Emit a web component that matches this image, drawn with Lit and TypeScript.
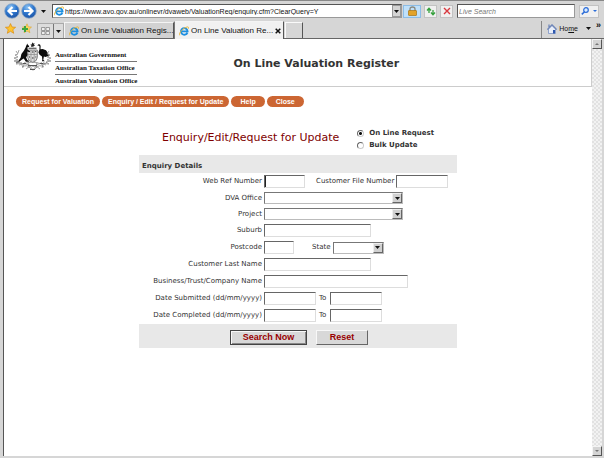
import { LitElement, html, svg, css } from "lit";
import { customElement, property } from "lit/decorators.js";

const ieLogo = html`<svg class="ie" viewBox="0 0 10 10" width="10" height="10" aria-hidden="true">
  <path d="M8.400 6.600A3.300 3.300 0 1 1 8.600 5.400H3" fill="none" stroke="#1d8fe0" stroke-width="1.900"/>
  <path d="M.7 9.300C-.4 7 4 1.600 8.600.9c1.300 0 1.100 1.100.5 2" fill="none" stroke="#e8b63a" stroke-width="1"/>
</svg>`;

const caret = html`<svg viewBox="0 0 5 3" width="5" height="3" aria-hidden="true"><path d="M0 0H5L2.500 3Z" fill="#111"/></svg>`;

const crest = html`<svg class="crest" viewBox="0 0 39 30" width="39" height="30" role="img" aria-label="Coat of arms">
  <path d="M19.500.3l.7 1.300 1.500-.3-.7 1.300 1 1.100-1.500.2-.2 1.500-1-1-1.300.6.4-1.400-1.300-.8 1.500-.4z" fill="#222"/>
  <path d="M15.500 6.300h8" stroke="#666" stroke-width="1.300"/>
  <path d="M14.800 8h9.500v7.500q0 3.500-4.700 5-4.800-1.500-4.800-5z" fill="#ddd" stroke="#666" stroke-width=".8"/>
  <path d="M14.800 12.500h9.500M18 8v11M21.200 8v11" stroke="#888" stroke-width=".7"/>
  <path d="M16 9.500h1M19 10h1.500M22.200 9.500h1M16 15h1M19 16h1.500M22.300 15h1" stroke="#333" stroke-width="1.200"/>
  <path d="M14.300 1.500l.6 1.500 1.400 1-.4 1-1.400.2.1 2.300 2.300 1.800-.3.900-2.500-.7.4 3.500-1.400 2.600 1.300 2.600 1.500.6v.9h-3l-2.200-3.200-2.300 1.500-3 2.600-2.900.2 3-2.100 2.100-3 .8-3.800 2.600-3.500 1.600-2.800.5-1.600z" fill="#0c0c0c"/>
  <path d="M24.300 3.600l1.200-1.300 1.500.2.6 1.400-.1 3.300 2.200-.3 3.300 1.300 2.200 3.200.8 3.200-1.600-.5-1.500.8-2-.3-.6 3.200 1.500 1.500h-2.900l.4-1.400-.3-3.500-2.400-1.600-1.200-2.500 1-2.500.1-3.300-.4-.8z" fill="#0c0c0c"/>
  <g fill="none" stroke="#8a8a8a" stroke-width=".8">
    <path d="M3 9l2 3-3 1 3 2-4 1 4 2-4 1 5 1-3 2 5-.5M6 8l-1 3M36 9l-2 3 3 1-3 2 4 1-4 2 4 1-5 1 3 2-5-.5"/>
    <path d="M5 20q5 3 9 1t11 0 9-1M6 23q5-3 10 0t8 0 9 0M9 25q5-3 8 1t6 0 8-1M13 27l4-3 3 4 3-4 4 3"/>
    <path d="M8 20l2 6M12 20l-2 5M15 20l1 6M24 20l-1 6M28 20l2 5M31 20l-2 6"/>
  </g>
  <path d="M10 21.500h3M15 23.500h9M27 21.500h3M17 27.500h5" stroke="#555" stroke-width="1"/>
</svg>`;

const globe = (flip: boolean) => html`<svg viewBox="0 0 16 16" width="16" height="16" aria-hidden="true">
  <defs><radialGradient id="g" cx=".4" cy=".25" r=".8"><stop offset="0" stop-color="#8cc4f4"/><stop offset=".5" stop-color="#2f78cf"/><stop offset="1" stop-color="#1a4fa0"/></radialGradient></defs>
  <circle cx="8" cy="8" r="7.300" fill="url(#g)" stroke="#8fa9c6" stroke-width=".8"/>
  ${flip
    ? svg`<path d="M3 8h8M7.500 4l4 4-4 4" fill="none" stroke="#fff" stroke-width="2.200"/>`
    : svg`<path d="M13 8H5M8.500 4l-4 4 4 4" fill="none" stroke="#fff" stroke-width="2.200"/>`}
</svg>`;

const control = css`
  button, input, select { font: inherit; color: inherit; margin: 0; padding: 0; border-radius: 0; box-sizing: border-box; }
  button { background: none; border: 0; }
  svg { display: block; flex: none; }
`;

@customElement("browser-chrome")
export class BrowserChrome extends LitElement {
  static styles = [control, css`
    :host { display: block; font: 8px/10px "Liberation Sans", Arial, sans-serif; color: #111; border-top: 1px solid #888; }
    .bar { display: flex; align-items: center; }
    .address { height: 20px; padding: 1px 5px 1px 4px; box-sizing: border-box; }
    .arrows { display: flex; align-items: center; gap: 1px; }
    .arrows .more { margin-left: 3px; }
    .field { display: flex; align-items: center; flex: 1; min-width: 0; height: 14px; margin-left: 6px; box-sizing: border-box; background: #fff; border: 1px solid #999; border-top-color: #555; border-left-color: #555; }
    .field svg { margin-left: 1px; }
    .field input { flex: 1; min-width: 0; border: 0; margin-left: 1px; background: none; outline: 0; font-size: 7px; height: 11px; }
    .drop { display: grid; place-items: center; width: 9px; height: 12px; background: #d4d4d4; border: 1px solid #999; }
    .drop svg { margin: 0; }
    .tool { display: grid; place-items: center; width: 13px; height: 13px; margin-left: 3px; background: #f0f0f0; border: 1px solid #c2c2c2; }
    .lock { width: 18px; margin-left: 1px; background: #bfe0fa; border-color: #8cbde6; }
    .search { flex: none; width: 118px; margin-left: 4px; }
    .search input { font-style: italic; }
    .search input::placeholder { color: #777; opacity: 1; }
    .go { grid-auto-flow: column; gap: 3px; width: 20px; margin-left: 4px; }
    .tabs { height: 17px; align-items: stretch; border-bottom: 1px solid #666; }
    .fav { display: flex; align-items: center; gap: 5px; padding: 0 5px 3px 5px; }
    .quick { display: flex; margin-top: 2px; border: 1px solid #aaa; border-bottom: 0; background: #dcdcdc; }
    .quick button { display: grid; place-items: center; width: 15px; }
    .quick button + button { width: 10px; border-left: 1px solid #777; }
    .tab { display: flex; align-items: center; gap: 2px; width: 110px; margin-top: 1px; padding: 0 4px; box-sizing: border-box; border: 1px solid #f4f4f4; border-right-color: #555; border-bottom: 0; background: #d2d2d2; white-space: nowrap; }
    .tab.on { margin: 0 0 -1px; background: #f1f1f1; border-left-color: #777; }
    .label { flex: 1; text-align: left; }
    .blank { width: 18px; margin: 1px 0 0 1px; border: 1px solid #fafafa; border-right-color: #555; border-bottom: 0; }
    .home { display: flex; align-items: center; gap: 2px; margin-left: auto; padding: 0 3px 2px 5px; border-left: 1px solid #888; }
    .home a { color: inherit; text-decoration: none; font-size: 7px; }
    .home .caret { margin-left: 6px; }
    .chev { margin-left: 3px; font: bold 9px/9px "Liberation Sans", Arial, sans-serif; align-self: flex-start; }
  `];

  render() {
    return html`
      <div class="bar address">
        <div class="arrows">
          <button aria-label="Back">${globe(false)}</button>
          <button aria-label="Forward">${globe(true)}</button>
          <button class="more" aria-label="Recent pages">${caret}</button>
        </div>
        <div class="field">
          ${ieLogo}
          <input aria-label="Address" value="https://www.avo.gov.au/onlinevr/dvaweb/ValuationReq/enquiry.cfm?ClearQuery=Y">
          <button class="drop" aria-label="Show addresses">${caret}</button>
        </div>
        <button class="tool lock" aria-label="Security">
          <svg viewBox="0 0 9 10" width="9" height="10"><path d="M2 5V3q0-2 2.500-2T7 3v2" fill="none" stroke="#8a8a80" stroke-width="1.300"/><rect x=".5" y="4.500" width="8" height="5" rx=".5" fill="#e2a32a" stroke="#a87312" stroke-width=".7"/></svg>
        </button>
        <button class="tool" aria-label="Refresh">
          <svg viewBox="0 0 10 9" width="10" height="9"><path d="M3 1v5M1 3.500L3 1.200 5 3.500M7 8V3M5 5.500l2 2.300 2-2.300" fill="none" stroke="#35a03c" stroke-width="1.300"/></svg>
        </button>
        <button class="tool" aria-label="Stop">
          <svg viewBox="0 0 8 8" width="8" height="8"><path d="M1 1l6 6M7 1L1 7" stroke="#d8383e" stroke-width="1.400"/></svg>
        </button>
        <div class="field search"><input aria-label="Search" placeholder="Live Search"></div>
        <button class="tool go" aria-label="Go">
          <svg viewBox="0 0 8 8" width="8" height="8"><circle cx="5" cy="3" r="2.300" fill="#d9ecff" stroke="#2b6cd8" stroke-width="1.200"/><path d="M3.500 4.800L.8 7.400" stroke="#2b6cd8" stroke-width="1.500"/></svg>
          <svg viewBox="0 0 4 2" width="4" height="2"><path d="M0 0h4L2 2z" fill="#2b6cd8"/></svg>
        </button>
      </div>
      <div class="bar tabs">
        <div class="fav">
          <button aria-label="Favorites"><svg viewBox="0 0 11 11" width="11" height="11"><path d="M5.500.6L7 4l3.600.3L7.800 6.700l.9 3.600-3.200-2-3.200 2 .9-3.600L.4 4.300 4 4z" fill="#ffc42e" stroke="#d98b12" stroke-width=".7"/></svg></button>
          <button aria-label="Add to favorites"><svg viewBox="0 0 11 11" width="11" height="11"><path d="M6 .8l1.300 3 3.200.3L8 6.400l.9 3.300L6 8 3 9.700l.9-3.300L1.500 4.100l3.200-.3z" fill="#ffd45e" stroke="#d9a332" stroke-width=".6"/><path d="M4 3v6M1 6h6" stroke="#3ba63f" stroke-width="2"/></svg></button>
        </div>
        <div class="quick">
          <button aria-label="Quick tabs"><svg viewBox="0 0 9 8" width="9" height="8"><path d="M.5.5h3.500v3H.5zM5 .5h3.500v3H5zM.5 4.500h3.500v3H.5zM5 4.500h3.500v3H5z" fill="#eee" stroke="#888" stroke-width=".8"/></svg></button>
          <button aria-label="Tab list">${caret}</button>
        </div>
        <button class="tab">${ieLogo}<span class="label">On Line Valuation Regis...</span></button>
        <button class="tab on">${ieLogo}<span class="label">On Line Valuation Re...</span>
          <svg viewBox="0 0 6 6" width="6" height="6"><path d="M.7.7l4.600 4.600M5.300.7L.7 5.300" stroke="#111" stroke-width="1.500"/></svg></button>
        <button class="blank" aria-label="New tab"></button>
        <div class="home">
          <svg viewBox="0 0 10 10" width="10" height="10"><path d="M1.500 5v4.500h7V5L5 1.500z" fill="#e8eefa" stroke="#7b93c4" stroke-width=".8"/><path d="M.3 5.500L5 .8l4.700 4.700M2 .5V4" fill="none" stroke="#6f86b8" stroke-width="1.300"/><path d="M6 6h2v3.500H6z" fill="#2e58ae"/></svg>
          <a href="#">Ho<u>m</u>e</a>
          <span class="caret">${caret}</span>
          <span class="chev">»</span>
        </div>
      </div>`;
  }
}

@customElement("scroll-rail")
export class ScrollRail extends LitElement {
  static styles = [control, css`
    :host { display: flex; flex-direction: column; justify-content: space-between; width: 10px; background: repeating-conic-gradient(#e2e2e2 0 25%, #f2f2f2 0 50%) 0 0 / 4px 4px; }
    button { display: grid; place-items: center; width: 10px; height: 10px; background: #d4d4d4; border: 1px solid #f4f4f4; border-right-color: #555; border-bottom-color: #555; }
  `];

  render() {
    return html`
      <button aria-label="Scroll up"><svg viewBox="0 0 4 2" width="4" height="2"><path d="M0 2h4L2 0z" fill="#777"/></svg></button>
      <button aria-label="Scroll down"><svg viewBox="0 0 4 2" width="4" height="2"><path d="M0 0h4L2 2z" fill="#777"/></svg></button>`;
  }
}

interface Part {
  id: string;
  label: string;
  size: string;
  select?: boolean;
}

const ROWS: Part[][] = [
  [{ id: "ref", label: "Web Ref Number", size: "w41" }, { id: "file", label: "Customer File Number", size: "w52" }],
  [{ id: "office", label: "DVA Office", size: "w139", select: true }],
  [{ id: "project", label: "Project", size: "w139", select: true }],
  [{ id: "suburb", label: "Suburb", size: "w107" }],
  [{ id: "postcode", label: "Postcode", size: "w30" }, { id: "state", label: "State", size: "w51", select: true }],
  [{ id: "last", label: "Customer Last Name", size: "w107" }],
  [{ id: "business", label: "Business/Trust/Company Name", size: "w144" }],
  [{ id: "sub-from", label: "Date Submitted (dd/mm/yyyy)", size: "w52" }, { id: "sub-to", label: "To", size: "w52" }],
  [{ id: "com-from", label: "Date Completed (dd/mm/yyyy)", size: "w52" }, { id: "com-to", label: "To", size: "w52" }],
];

@customElement("enquiry-form")
export class EnquiryForm extends LitElement {
  @property({ attribute: false }) rows: Part[][] = ROWS;

  static styles = [control, css`
    :host { display: block; font: 7px/9px "DejaVu Sans", Verdana, sans-serif; color: #333; }
    form { display: flex; flex-direction: column; align-items: center; }
    .head { display: flex; align-items: center; gap: 18px; }
    h2 { margin: 0; padding-bottom: 3px; font: 11px/14px "DejaVu Sans", Verdana, sans-serif; color: #800000; }
    .modes { display: flex; flex-direction: column; gap: 3px; font-weight: bold; }
    .modes label { display: flex; align-items: center; gap: 5px; }
    .modes input { appearance: none; width: 7px; height: 7px; border: 1px solid #ccc; border-top-color: #666; border-left-color: #666; border-radius: 50%; background: #fff; }
    .modes input:checked { background: radial-gradient(circle, #111 0 1px, #fff 2px); }
    .panel { width: 54%; min-width: 318px; margin-top: 5px; }
    h3 { margin: 0; padding: 7px 3px 2px; font: bold 7px/9px "DejaVu Sans", Verdana, sans-serif; background: #e8e8e8; }
    .rows { display: flex; flex-direction: column; gap: 4px; padding: 2px 0; }
    .row { display: grid; grid-template-columns: 123px 1fr; gap: 2px; align-items: center; }
    .row > label { text-align: right; white-space: nowrap; }
    .parts { display: flex; align-items: center; }
    .parts label { margin: 0 2px 0 11px; white-space: nowrap; }
    .parts .gap-state { margin-left: 18px; }
    .parts .gap-sub-to, .parts .gap-com-to { margin: 0 4px 0 3px; }
    input.text, select { height: 13px; border: 1px solid #ddd; border-top-color: #666; border-left-color: #666; background: #fff; outline: 0; }
    #ref { box-shadow: inset 1px 0 #222; }
    select { appearance: none; height: 12px; width: 100%; display: block; border-color: #777 #bbb #bbb #777; }
    .pick { position: relative; }
    .pick i { position: absolute; top: 1px; right: 1px; bottom: 1px; width: 10px; display: grid; place-items: center; box-sizing: border-box; background: #d0d0d0; border: 1px solid #eee; border-right-color: #666; border-bottom-color: #666; pointer-events: none; }
    .w30 { width: 30px; }
    .w41 { width: 41px; }
    .w51 { width: 51px; }
    .w52 { width: 52px; }
    .w107 { width: 107px; }
    .w139 { width: 139px; }
    .w144 { width: 144px; }
    .actions { display: flex; justify-content: center; gap: 9px; padding: 6px 0 3px 2px; background: #e8e8e8; }
    .actions button { height: 15px; width: 52px; font: bold 9px/11px "Liberation Sans", Arial, sans-serif; color: #900; background: #d8d8d8; border: 1px solid #f8f8f8; border-right-color: #666; border-bottom-color: #666; }
    .actions .main { width: 77px; border-color: #444; box-shadow: inset 1px 1px #f8f8f8, inset -1px -1px #888; }
  `];

  private field(p: Part) {
    return p.select
      ? html`<span class="pick ${p.size}"><select id=${p.id}><option></option></select><i>${caret}</i></span>`
      : html`<input id=${p.id} class="text ${p.size}">`;
  }

  render() {
    return html`<form @submit=${(e: Event) => e.preventDefault()}>
      <div class="head">
        <h2>Enquiry/Edit/Request for Update</h2>
        <div class="modes">
          <label><input type="radio" name="mode" checked>On Line Request</label>
          <label><input type="radio" name="mode">Bulk Update</label>
        </div>
      </div>
      <div class="panel">
        <h3>Enquiry Details</h3>
        <div class="rows">
          ${this.rows.map(([first, second]) => html`<div class="row">
            <label for=${first.id}>${first.label}</label>
            <div class="parts">
              ${this.field(first)}
              ${second ? html`<label class="gap-${second.id}" for=${second.id}>${second.label}</label>${this.field(second)}` : ""}
            </div>
          </div>`)}
        </div>
        <div class="actions">
          <button class="main" type="submit">Search Now</button>
          <button type="reset">Reset</button>
        </div>
      </div>
    </form>`;
  }
}

@customElement("app-root")
export class AppRoot extends LitElement {
  static styles = [control, css`
    :host { display: flex; flex-direction: column; min-height: 100vh; background: #d6d6d6; }
    .window { flex: 1; display: flex; margin: 0 2px 2px 3px; border-left: 1px solid #555; background: #fff; }
    .page { flex: 1; min-width: 0; font: 7px/9px "DejaVu Sans", Verdana, sans-serif; }
    header { display: flex; align-items: center; gap: 96px; height: 48px; padding: 2px 9px 0; border-bottom: 1px solid #ccc; border-right: 1px solid #ccc; box-sizing: border-box; }
    .brand { display: flex; align-items: flex-start; gap: 3px; }
    .names { display: flex; flex-direction: column; margin-top: 9px; font: bold 7px/8px "Liberation Serif", "Times New Roman", serif; color: #111; white-space: nowrap; }
    .names span + span { border-top: 1px solid #777; margin-top: 2px; padding-top: 2px; }
    h1 { margin: 0; font: bold 11px/14px "DejaVu Sans", Verdana, sans-serif; color: #333; white-space: nowrap; }
    nav { display: flex; gap: 2px; padding: 9px 12px 22px; }
    nav a { padding: 1px 6px; border-radius: 6px; background: #cc6633; color: #fff; font-weight: bold; font-family: "Liberation Sans", Arial, sans-serif; text-decoration: none; white-space: nowrap; }
    nav .short { padding: 1px 9px; }
  `];

  render() {
    return html`
      <browser-chrome></browser-chrome>
      <div class="window">
        <main class="page">
          <header>
            <div class="brand">
              ${crest}
              <div class="names"><span>Australian Government</span><span>Australian Taxation Office</span><span>Australian Valuation Office</span></div>
            </div>
            <h1>On Line Valuation Register</h1>
          </header>
          <nav>
            <a href="#">Request for Valuation</a>
            <a href="#">Enquiry / Edit / Request for Update</a>
            <a class="short" href="#">Help</a>
            <a class="short" href="#">Close</a>
          </nav>
          <enquiry-form></enquiry-form>
        </main>
        <scroll-rail></scroll-rail>
      </div>`;
  }
}
